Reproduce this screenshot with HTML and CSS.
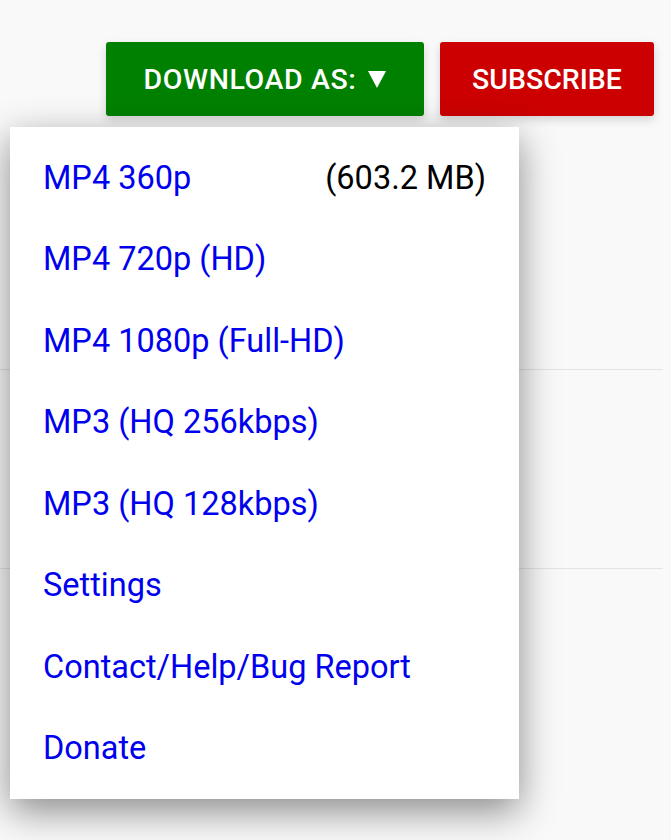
FILE: index.html
```html
<!DOCTYPE html>
<html lang="en">
<head>
    <meta charset="UTF-8">
    <meta name="viewport" content="width=device-width, initial-scale=1.0">
    <title>Download</title>
    <link rel="stylesheet" href="styles.css">
</head>
<body>

<div class="top-bar">
    <button class="download-button"><span class="label">DOWNLOAD AS:</span><span class="arrow"></span></button>
    <button class="subscribe-button">SUBSCRIBE</button>
</div>

<div class="video-list">
    <div class="video-row"></div>
    <div class="video-row"></div>
</div>

<div class="download-menu">
    <a class="menu-item" href="#"><span>MP4 360p</span><span class="file-size">(603.2 MB)</span></a>
    <a class="menu-item" href="#">MP4 720p (HD)</a>
    <a class="menu-item" href="#">MP4 1080p (Full-HD)</a>
    <a class="menu-item" href="#">MP3 (HQ 256kbps)</a>
    <a class="menu-item" href="#">MP3 (HQ 128kbps)</a>
    <a class="menu-item" href="#">Settings</a>
    <a class="menu-item" href="#">Contact/Help/Bug Report</a>
    <a class="menu-item" href="#">Donate</a>
</div>

</body>
</html>
```

FILE: styles.css
```css
body {
    font-family: Roboto, "Liberation Sans", Arial, sans-serif;
    margin: 0;
    padding: 0;
    background-color: #f9f9f9;
    position: relative;
    min-height: 840px;
    overflow: hidden;
}

.top-bar {
    display: flex;
    justify-content: flex-end;
    gap: 16px;
    padding: 42px 17px 0 0;
}

.top-bar button {
    display: flex;
    justify-content: center;
    align-items: center;
    height: 74px;
    padding: 0;
    border: none;
    border-radius: 3px;
    color: white;
    font-family: Roboto, sans-serif;
    font-size: 28.5px;
    font-weight: 500;
    cursor: pointer;
    box-shadow: 0 4px 10px rgba(0, 0, 0, 0.15);
}

.download-button {
    width: 318px;
    background-color: #008000;
}

.download-button .label {
    letter-spacing: 0.6px;
}

.download-button .arrow {
    width: 0;
    height: 0;
    margin-left: 12px;
    border-left: 9.5px solid transparent;
    border-right: 9.5px solid transparent;
    border-top: 17px solid white;
}

.subscribe-button {
    width: 214px;
    background-color: #cc0000;
}

.video-list {
    margin: 55px 8px 0 0;
}

.video-row {
    height: 198px;
    border-bottom: 1px solid #e3e3e3;
}

.download-menu {
    position: absolute;
    top: 127px;
    left: 10px;
    width: 509px;
    box-sizing: border-box;
    padding: 10px 33px;
    background-color: white;
    box-shadow: 0 12px 36px rgba(0, 0, 0, 0.45);
}

.menu-item {
    display: flex;
    justify-content: space-between;
    align-items: center;
    height: 81.5px;
    color: #0000ee;
    text-decoration: none;
    font-size: 32.5px;
}

.file-size {
    color: black;
}
```
